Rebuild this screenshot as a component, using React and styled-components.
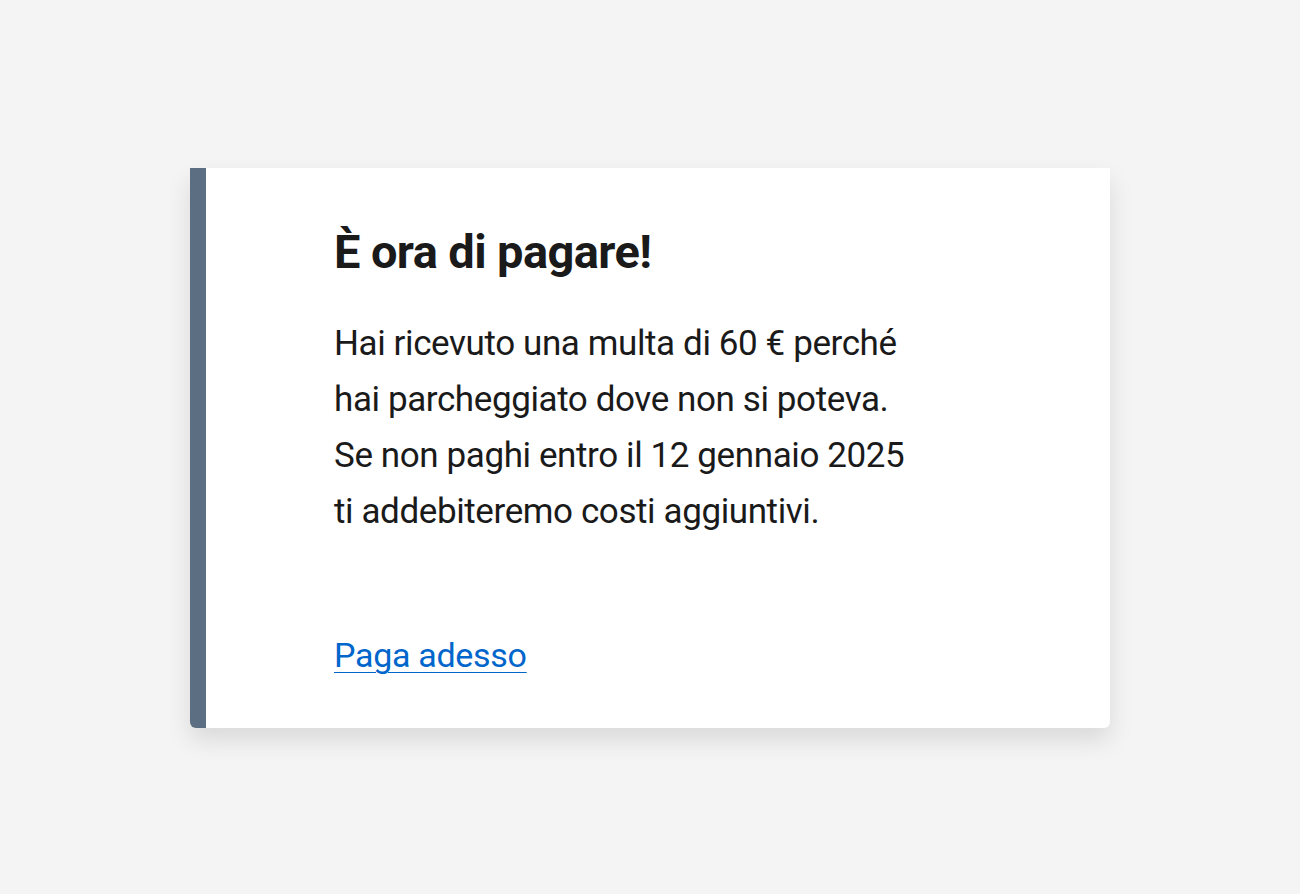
import styled, { createGlobalStyle } from 'styled-components';

const GlobalStyle = createGlobalStyle`
  html, body {
    margin: 0;
    padding: 0;
    background: #f4f4f4;
  }
  body {
    font-family: Roboto, "Noto Sans", sans-serif;
    color: #1a1a1a;
  }
`;

const Page = styled.div`
  min-height: 100vh;
  padding-top: 2px;
  display: flex;
  align-items: center;
  justify-content: center;
  box-sizing: border-box;
`;

const Card = styled.div`
  width: 920px;
  height: 560px;
  box-sizing: border-box;
  background: #fff;
  border-left: 16px solid #5c6f82;
  border-radius: 0 0 6px 6px;
  box-shadow: 0 12px 24px rgba(0, 0, 0, 0.11);
  padding: 56px 128px 0;
  display: flex;
  flex-direction: column;
`;

const Title = styled.h2`
  margin: 0;
  font-size: 47px;
  line-height: 56px;
  font-weight: 700;
  letter-spacing: -0.6px;
  color: #1a1a1a;
`;

const Text = styled.p`
  margin: 36px 0 0;
  font-size: 35px;
  line-height: 56px;
  font-weight: 400;
  letter-spacing: -0.4px;
  color: #1a1a1a;
`;

const Link = styled.a`
  margin-top: 87px;
  align-self: flex-start;
  font-size: 34px;
  line-height: 56px;
  color: #0066cc;
  text-decoration: underline;
  text-underline-offset: 5px;
  text-decoration-thickness: 1px;
  letter-spacing: -0.3px;
`;

export default function App() {
  return (
    <>
      <GlobalStyle />
      <Page>
        <Card>
          <Title>È ora di pagare!</Title>
          <Text>
            Hai ricevuto una multa di 60 € perché
            <br />
            hai parcheggiato dove non si poteva.
            <br />
            Se non paghi entro il 12 gennaio 2025
            <br />
            ti addebiteremo costi aggiuntivi.
          </Text>
          <Link href="#">Paga adesso</Link>
        </Card>
      </Page>
    </>
  );
}
